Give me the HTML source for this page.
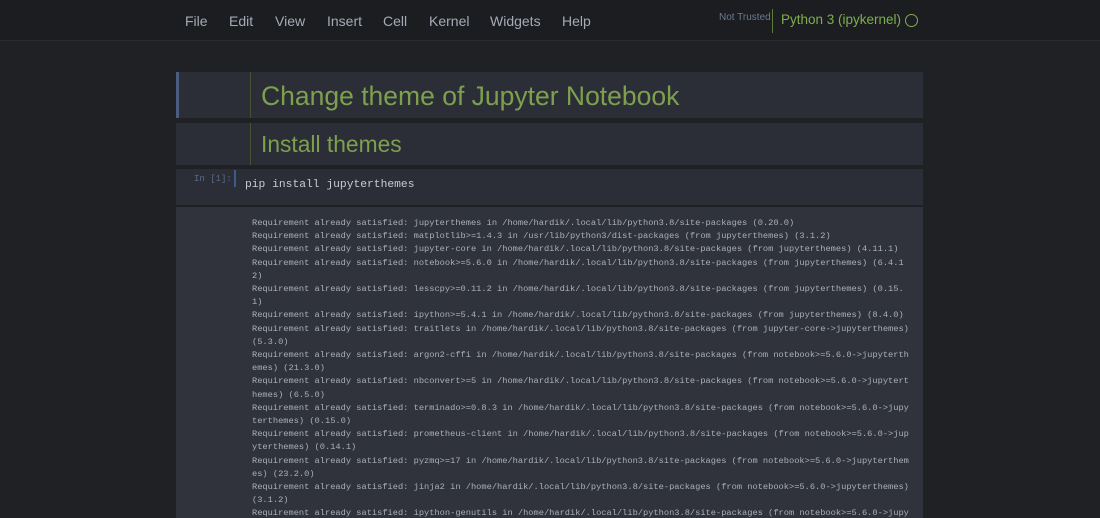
<!DOCTYPE html><html><head><style>
html,body{margin:0;width:1100px;height:518px;overflow:hidden;background:#202124;font-family:"Liberation Sans",sans-serif}
.hdr{position:absolute;left:0;top:0;width:1100px;height:40px;background:#1c1d20;border-bottom:1px solid #2a2b2f}
.menu span{position:absolute;top:13px;color:#a3acb8;font-size:14px}
.nt{position:absolute;left:719px;top:12px;font-size:10px;color:#6b7a90}
.sep{position:absolute;left:772px;top:9px;width:1px;height:24px;background:#5c7a3a}
.ker{position:absolute;left:781px;top:12px;font-size:13.5px;color:#7eae4e}
.circ{position:absolute;left:905px;top:14px;width:11px;height:11px;border:1.5px solid #7eae4e;border-radius:50%}
.cell{position:absolute;left:176px;width:747px;background:#2b2e37}
.vl{position:absolute;left:74px;top:0;bottom:0;width:1px;background:#4b4f36}
.h1{position:absolute;left:85px;color:#7ea04e;font-size:26.5px}
.mono{font-family:"Liberation Mono",monospace}
.out{position:absolute;left:176px;top:207px;width:747px;height:311px;background:#30333c;overflow:hidden}
pre{margin:0;position:absolute;left:76px;top:10px;font-size:8.7px;line-height:13.2px;color:#a9b0bb;font-family:"Liberation Mono",monospace}
</style></head><body>
<div class="hdr"><div class="menu">
<span style="left:185px">File</span><span style="left:229px">Edit</span><span style="left:275px">View</span><span style="left:327px">Insert</span><span style="left:383px">Cell</span><span style="left:429px">Kernel</span><span style="left:490px">Widgets</span><span style="left:562px">Help</span></div>
<div class="nt">Not Trusted</div><div class="sep"></div><div class="ker">Python 3 (ipykernel)</div><div class="circ"></div></div>
<div class="cell" style="top:72px;height:46px"><div style="position:absolute;left:0;top:0;bottom:0;width:3px;background:#4a5c80"></div><div class="vl"></div><div class="h1" style="top:9px">Change theme of Jupyter Notebook</div></div>
<div class="cell" style="top:123px;height:42px"><div class="vl"></div><div class="h1" style="top:8px;font-size:22.8px">Install themes</div></div>
<div class="cell" style="top:169px;height:36px"><div class="mono" style="position:absolute;left:18px;top:5px;font-size:9px;color:#5b6a85">In [1]:</div><div style="position:absolute;left:58px;top:1px;height:17px;width:2px;background:#3b5a90"></div><div class="mono" style="position:absolute;left:69px;top:10px;font-size:11.3px;color:#c8ccd2">pip install jupyterthemes</div></div>
<div class="out"><pre>Requirement already satisfied: jupyterthemes in /home/hardik/.local/lib/python3.8/site-packages (0.20.0)
Requirement already satisfied: matplotlib>=1.4.3 in /usr/lib/python3/dist-packages (from jupyterthemes) (3.1.2)
Requirement already satisfied: jupyter-core in /home/hardik/.local/lib/python3.8/site-packages (from jupyterthemes) (4.11.1)
Requirement already satisfied: notebook>=5.6.0 in /home/hardik/.local/lib/python3.8/site-packages (from jupyterthemes) (6.4.1
2)
Requirement already satisfied: lesscpy>=0.11.2 in /home/hardik/.local/lib/python3.8/site-packages (from jupyterthemes) (0.15.
1)
Requirement already satisfied: ipython>=5.4.1 in /home/hardik/.local/lib/python3.8/site-packages (from jupyterthemes) (8.4.0)
Requirement already satisfied: traitlets in /home/hardik/.local/lib/python3.8/site-packages (from jupyter-core->jupyterthemes)
(5.3.0)
Requirement already satisfied: argon2-cffi in /home/hardik/.local/lib/python3.8/site-packages (from notebook>=5.6.0->jupyterth
emes) (21.3.0)
Requirement already satisfied: nbconvert>=5 in /home/hardik/.local/lib/python3.8/site-packages (from notebook>=5.6.0->jupytert
hemes) (6.5.0)
Requirement already satisfied: terminado>=0.8.3 in /home/hardik/.local/lib/python3.8/site-packages (from notebook>=5.6.0->jupy
terthemes) (0.15.0)
Requirement already satisfied: prometheus-client in /home/hardik/.local/lib/python3.8/site-packages (from notebook>=5.6.0->jup
yterthemes) (0.14.1)
Requirement already satisfied: pyzmq>=17 in /home/hardik/.local/lib/python3.8/site-packages (from notebook>=5.6.0->jupyterthem
es) (23.2.0)
Requirement already satisfied: jinja2 in /home/hardik/.local/lib/python3.8/site-packages (from notebook>=5.6.0->jupyterthemes)
(3.1.2)
Requirement already satisfied: ipython-genutils in /home/hardik/.local/lib/python3.8/site-packages (from notebook>=5.6.0->jupy</pre></div>
</body></html>
